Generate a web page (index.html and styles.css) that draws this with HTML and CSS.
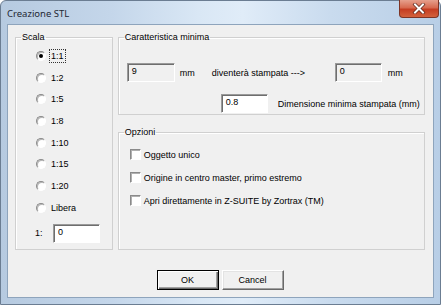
FILE: index.html
```html
<!DOCTYPE html>
<html lang="it">
<head>
  <meta charset="UTF-8">
  <title>Creazione STL</title>
  <link rel="stylesheet" href="styles.css">
</head>
<body>
  <div class="window">
    <div class="titlebar">
      <span class="title">Creazione STL</span>
      <button class="close" title="Chiudi">
        <svg width="14" height="11" viewBox="0 0 14 11">
          <path d="M3 1.5 L11 9.5 M11 1.5 L3 9.5" stroke="#5a2418" stroke-width="3.4" stroke-linecap="square"/>
          <path d="M3 1.5 L11 9.5 M11 1.5 L3 9.5" stroke="#fff" stroke-width="2" stroke-linecap="square"/>
        </svg>
      </button>
    </div>

    <div class="client">
      <div class="groups">
        <fieldset class="group scala">
          <legend>Scala</legend>
          <div class="radio checked"><span class="mark"></span><span class="focus">1:1</span></div>
          <div class="radio"><span class="mark"></span><span>1:2</span></div>
          <div class="radio"><span class="mark"></span><span>1:5</span></div>
          <div class="radio"><span class="mark"></span><span>1:8</span></div>
          <div class="radio"><span class="mark"></span><span>1:10</span></div>
          <div class="radio"><span class="mark"></span><span>1:15</span></div>
          <div class="radio"><span class="mark"></span><span>1:20</span></div>
          <div class="radio"><span class="mark"></span><span>Libera</span></div>
          <div class="free">
            <span class="free-label">1:</span>
            <div class="edit">0</div>
          </div>
        </fieldset>

        <div class="right">
          <fieldset class="group feature">
            <legend>Caratteristica minima</legend>
            <div class="row">
              <div class="edit disabled first">9</div>
              <span class="unit">mm</span>
              <span class="arrow-text">diventerà stampata ---&gt;</span>
              <div class="edit disabled">0</div>
              <span class="unit-end">mm</span>
            </div>
            <div class="row second">
              <div class="edit">0.8</div>
              <span class="hint">Dimensione minima stampata (mm)</span>
            </div>
          </fieldset>

          <fieldset class="group options">
            <legend>Opzioni</legend>
            <div class="check"><span class="box"></span><span>Oggetto unico</span></div>
            <div class="check"><span class="box"></span><span>Origine in centro master, primo estremo</span></div>
            <div class="check"><span class="box"></span><span>Apri direttamente in Z-SUITE by Zortrax (TM)</span></div>
          </fieldset>
        </div>
      </div>

      <div class="buttons">
        <button class="btn default">OK</button>
        <button class="btn">Cancel</button>
      </div>
    </div>
  </div>
</body>
</html>
```

FILE: styles.css
```css
body {
  margin: 0;
  background: #fff;
  font-family: "Liberation Sans", Arial, sans-serif;
  font-size: 9px;
  color: #000;
}
.window {
  box-sizing: border-box;
  width: 441px;
  height: 305px;
  border: 1px solid #6b7d92;
  border-radius: 6px 6px 0 0;
  padding: 0 6px 6px 6px;
  background: linear-gradient(90deg, #b6cae0 0%, #c4d6ea 25%, #d9e7f5 45%, #e0ecf8 55%, #c9dbee 75%, #b8cee6 100%);
  display: flex;
  flex-direction: column;
}
.titlebar {
  height: 23px;
  display: flex;
  align-items: flex-start;
}
.title {
  font-family: "Noto Sans", sans-serif;
  font-size: 9.5px;
  line-height: 23px;
  padding-top: 1px;
  color: #1e2733;
  flex: 1;
}
.close {
  width: 40px;
  height: 18px;
  margin-top: -1px;
  margin-right: -5px;
  padding: 0;
  border: 1px solid #7d3425;
  border-top: none;
  border-radius: 0 0 4px 4px;
  background: linear-gradient(#e6a08d, #d76a50 45%, #c53d22 55%, #d3613c);
  display: flex;
  align-items: center;
  justify-content: center;
}
.client {
  flex: 1;
  border: 1px solid #8ea4bc;
  background: #f0f0f0;
  padding: 6px 8px 0 7px;
  display: flex;
  flex-direction: column;
}
.groups {
  display: flex;
  gap: 5px;
  height: 219px;
}
.group {
  margin: 0;
  padding: 0;
  min-width: 0;
  border: 1px solid #d0d0d0;
  box-shadow: inset 1px 1px #fff;
}
.group legend {
  margin-left: 5px;
  padding: 0 1px;
  line-height: 12px;
}
.scala {
  width: 98px;
  box-sizing: border-box;
  padding-top: 2px;
}
.radio {
  height: 21.7px;
  display: flex;
  align-items: center;
  padding-left: 20px;
}
.radio .mark {
  box-sizing: border-box;
  width: 10px;
  height: 10px;
  border-radius: 50%;
  border: 1px solid;
  border-color: #8a8a8a #fff #fff #8a8a8a;
  background: #fff;
  box-shadow: inset 1px 1px #b5b5b5;
  margin-right: 5px;
  display: flex;
  align-items: center;
  justify-content: center;
}
.radio.checked .mark::after {
  content: "";
  width: 4px;
  height: 4px;
  border-radius: 50%;
  background: #000;
}
.focus {
  outline: 1px dotted #333;
  outline-offset: 1px;
}
.free {
  margin-top: 5.4px;
  display: flex;
  align-items: center;
  padding-left: 19px;
}
.free-label {
  width: 18px;
}
.edit {
  box-sizing: border-box;
  width: 47px;
  height: 19px;
  border: 1px solid;
  border-color: #9a9a9a #fff #fff #9a9a9a;
  box-shadow: inset 1px 1px #6e6e6e;
  background: #fff;
  padding: 1px 0 0 4px;
  line-height: 12px;
}
.edit.disabled {
  background: #f0f0f0;
}
.right {
  width: 308px;
  display: flex;
  flex-direction: column;
}
.feature {
  padding: 20px 0 1px 0;
}
.row {
  display: flex;
  align-items: center;
  height: 19px;
}
.row .first {
  margin-left: 8px;
  width: 48px;
}
.unit {
  width: 37px;
  padding-left: 5px;
  box-sizing: border-box;
}
.arrow-text {
  width: 123px;
}
.unit-end {
  margin-left: 6px;
}
.row.second {
  margin-top: 12px;
  padding-left: 102px;
}
.hint {
  margin-left: 10px;
}
.options {
  flex: 1;
  margin-top: 11px;
  padding-top: 5px;
}
.check {
  height: 23px;
  display: flex;
  align-items: center;
  padding-left: 11px;
}
.check .box {
  box-sizing: border-box;
  width: 11px;
  height: 11px;
  border: 1px solid;
  border-color: #8a8a8a #fff #fff #8a8a8a;
  box-shadow: inset 1px 1px #b0b0b0;
  background: #fff;
  margin-right: 3px;
}
.buttons {
  margin-top: 20px;
  display: flex;
  justify-content: center;
  gap: 3px;
}
.btn {
  box-sizing: border-box;
  width: 62px;
  height: 20px;
  padding: 0;
  font-family: "Liberation Sans", Arial, sans-serif;
  font-size: 9px;
  color: #000;
  background: #f0f0f0;
  border: 1px solid;
  border-color: #fff #696969 #696969 #fff;
  box-shadow: inset -1px -1px #a0a0a0, inset 1px 1px #e3e3e3;
}
.btn.default {
  border: 1px solid #000;
  box-shadow: inset 1px 1px #fff, inset -1px -1px #696969, inset -2px -2px #a0a0a0;
}
```
